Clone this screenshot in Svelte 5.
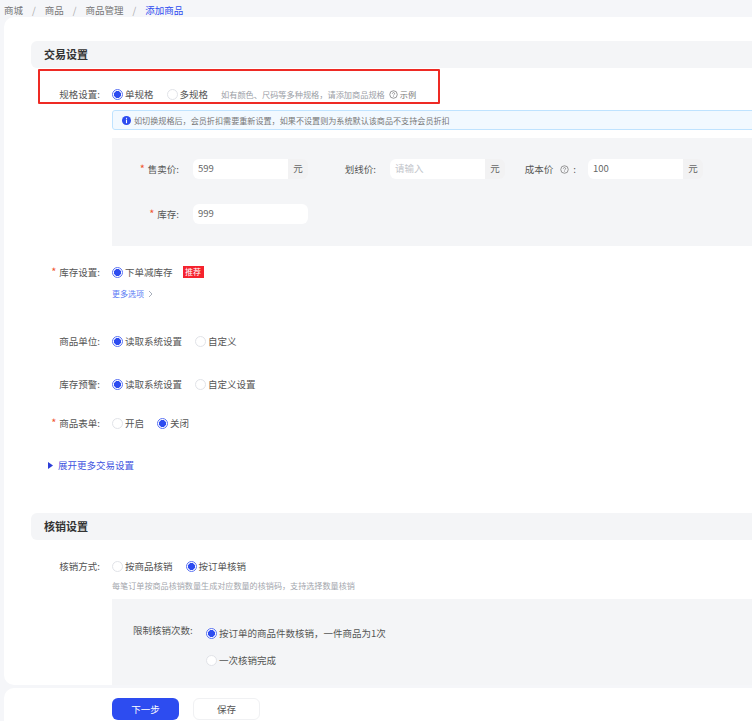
<script>
  const crumbs = ["商城", "商品", "商品管理"];

  const optionRows = [
    { label: "商品单位", name: "row-unit", options: [["读取系统设置", true], ["自定义", false]] },
    { label: "库存预警", name: "row-warn", options: [["读取系统设置", true], ["自定义设置", false]] },
    { label: "商品表单", name: "row-form", required: true, options: [["开启", false], ["关闭", true]] }
  ];
</script>

{#snippet radio(text, checked)}
  <span class="radio">
    <span class="dot" class:checked></span>
    <span>{text}</span>
  </span>
{/snippet}

{#snippet help(size)}
  <svg class="help" width={size} height={size} viewBox="0 0 12 12" fill="none" stroke="currentColor">
    <circle cx="6" cy="6" r="5" />
    <path d="M4.5 4.8a1.5 1.5 0 1 1 2.3 1.3c-.5.3-.8.6-.8 1.1" />
    <path d="M6 8.4v.8" />
  </svg>
{/snippet}

<div class="page">
  <nav class="crumbs">
    {#each crumbs as c}
      <span>{c}</span><span class="sep">/</span>
    {/each}
    <span class="current">添加商品</span>
  </nav>

  <main class="card">
    <h2 class="section">交易设置</h2>

    <div class="row spec">
      <div class="label">规格设置:</div>
      <div class="controls">
        {@render radio("单规格", true)}
        {@render radio("多规格", false)}
        <span class="hint">如有颜色、尺码等多种规格，请添加商品规格</span>
        <span class="example">{@render help(9)}示例</span>
      </div>
    </div>
    <div class="highlight"></div>

    <div class="indent alert">
      <svg width="9" height="9" viewBox="0 0 10 10">
        <circle cx="5" cy="5" r="5" fill="#2d4cf0" />
        <rect x="4.4" y="2" width="1.2" height="1.2" fill="#fff" />
        <rect x="4.4" y="4" width="1.2" height="4" fill="#fff" />
      </svg>
      <span>如切换规格后，会员折扣需要重新设置，如果不设置则为系统默认该商品不支持会员折扣</span>
    </div>

    <div class="indent panel prices">
      <div class="price-line">
        <div class="field first">
          <span class="flabel"><i>*</i>售卖价:</span>
          <span class="input"><span class="value">599</span></span><span class="unit">元</span>
        </div>
        <div class="field second">
          <span class="flabel">划线价:</span>
          <span class="input"><span class="placeholder">请输入</span></span><span class="unit">元</span>
        </div>
        <div class="field third">
          <span class="flabel">成本价{@render help(9)}:</span>
          <span class="input"><span class="value">100</span></span><span class="unit">元</span>
        </div>
      </div>
      <div class="price-line stock">
        <div class="field first">
          <span class="flabel"><i>*</i>库存:</span>
          <span class="input wide"><span class="value">999</span></span>
        </div>
      </div>
    </div>

    <div class="row stock-row">
      <div class="label"><i>*</i>库存设置:</div>
      <div class="controls">
        {@render radio("下单减库存", true)}
        <span class="badge">推荐</span>
      </div>
    </div>
    <div class="indent more">
      更多选项
      <svg width="5" height="8" viewBox="0 0 5 8" fill="none" stroke="#a9b0bd">
        <path d="M1 1l3 3-3 3" />
      </svg>
    </div>

    {#each optionRows as r}
      <div class="row {r.name}">
        <div class="label">{#if r.required}<i>*</i>{/if}{r.label}:</div>
        <div class="controls">
          {#each r.options as [text, checked]}
            {@render radio(text, checked)}
          {/each}
        </div>
      </div>
    {/each}

    <div class="expand">
      <svg width="5" height="7" viewBox="0 0 5 7"><path d="M0 0l5 3.5L0 7z" fill="#2d3fd8" /></svg>
      <span>展开更多交易设置</span>
    </div>

    <h2 class="section second-section">核销设置</h2>

    <div class="row verify">
      <div class="label">核销方式:</div>
      <div class="controls">
        {@render radio("按商品核销", false)}
        {@render radio("按订单核销", true)}
      </div>
    </div>
    <div class="indent verify-hint">每笔订单按商品核销数量生成对应数量的核销码，支持选择数量核销</div>

    <div class="indent panel limit">
      <div class="limit-label">限制核销次数:</div>
      <div class="limit-options">
        {@render radio("按订单的商品件数核销，一件商品为1次", true)}
        {@render radio("一次核销完成", false)}
      </div>
    </div>
  </main>

  <footer class="actions">
    <button class="primary">下一步</button>
    <button class="plain">保存</button>
  </footer>
</div>

<style>
  :global(body) {
    margin: 0;
    background: #f5f6f9;
    overflow: hidden;
  }
  .page {
    position: relative;
    width: 752px;
    height: 721px;
    overflow: hidden;
    font-family: "Noto Sans CJK SC", "Liberation Sans", sans-serif;
    font-size: 9.5px;
    color: #555;
  }
  .crumbs {
    height: 14px;
    padding: 3px 0 0 4px;
    display: flex;
    align-items: center;
    gap: 9px;
    color: #777;
  }
  .sep {
    color: #aaa;
  }
  .current {
    color: #2d4cf0;
  }
  .card {
    margin-left: 4px;
    width: 790px;
    height: 668px;
    padding: 24px 0 0 27px;
    box-sizing: border-box;
    background: #fff;
    border-radius: 10px;
    overflow: hidden;
  }
  .section {
    margin: 0;
    height: 27px;
    padding-left: 13px;
    line-height: 27px;
    font-size: 11px;
    font-weight: 700;
    color: #333;
    background: #f4f5f7;
    border-radius: 6px 0 0 6px;
  }
  .row {
    display: flex;
    align-items: center;
    height: 14px;
  }
  .label {
    width: 69px;
    text-align: right;
    white-space: nowrap;
    flex: none;
  }
  i {
    font-style: normal;
    font-size: 11px;
    line-height: 1;
    color: #f0562f;
    margin-right: 3px;
  }
  .controls {
    margin-left: 12px;
    display: flex;
    align-items: center;
    gap: 13px;
    white-space: nowrap;
  }
  .radio {
    display: inline-flex;
    align-items: center;
    gap: 2px;
    white-space: nowrap;
  }
  .dot {
    width: 11px;
    height: 11px;
    box-sizing: border-box;
    border: 1px solid #e1e3e8;
    border-radius: 50%;
    background: #fff;
    flex: none;
  }
  .dot.checked {
    border-color: #5a72f3;
    background: radial-gradient(circle, #2d4cf0 0 3.2px, #fff 3.8px);
  }
  .hint,
  .example {
    font-size: 8.2px;
    color: #9a9ea6;
  }
  .example {
    margin-left: -9px;
    display: inline-flex;
    align-items: center;
    gap: 2px;
    color: #777;
  }
  .help {
    flex: none;
    color: #777;
  }
  .spec {
    margin-top: 19px;
  }
  .highlight {
    position: absolute;
    left: 38px;
    top: 69px;
    width: 402px;
    height: 35px;
    box-sizing: border-box;
    border: 2px solid #ee2a24;
    border-radius: 1px;
    pointer-events: none;
  }
  .indent {
    margin-left: 81px;
  }
  .alert {
    margin-top: 9px;
    height: 20px;
    box-sizing: border-box;
    padding-left: 9px;
    display: flex;
    align-items: center;
    gap: 3px;
    background: #f2f9ff;
    border: 1px solid #bfe3ff;
    border-radius: 3px;
    font-size: 8.1px;
    color: #777;
    white-space: nowrap;
  }
  .panel {
    background: #f4f5f7;
  }
  .prices {
    margin-top: 8px;
    height: 108px;
    padding-top: 21px;
    box-sizing: border-box;
  }
  .price-line {
    display: flex;
    height: 20px;
  }
  .price-line.stock {
    margin-top: 25px;
  }
  .field {
    display: flex;
    align-items: center;
    white-space: nowrap;
  }
  .flabel {
    text-align: right;
    flex: none;
  }
  .first .flabel {
    width: 67px;
    margin-right: 14px;
  }
  .second {
    margin-left: 35px;
  }
  .second .flabel {
    width: 33px;
    margin-right: 14px;
  }
  .third {
    margin-left: 21px;
  }
  .third .flabel {
    width: 50px;
    margin-right: 12px;
    display: inline-flex;
    align-items: center;
    justify-content: flex-end;
  }
  .third .help {
    margin: 0 4px 0 7px;
  }
  .input {
    width: 95px;
    height: 20px;
    box-sizing: border-box;
    padding-left: 5px;
    background: #fff;
    border-radius: 6px 0 0 6px;
    line-height: 19px;
  }
  .input.wide {
    width: 115px;
    border-radius: 6px;
  }
  .value {
    color: #666;
  }
  .placeholder {
    color: #c3c6cc;
  }
  .unit {
    width: 20px;
    height: 20px;
    line-height: 19px;
    text-align: center;
    background: #f2f2f3;
    border-radius: 0 6px 6px 0;
    color: #666;
  }
  .stock-row {
    margin-top: 19px;
  }
  .badge {
    margin-left: -3px;
    height: 12px;
    padding: 0 2.5px;
    line-height: 12px;
    font-size: 8px;
    color: #fff;
    background: #f5222d;
  }
  .more {
    margin-top: 8px;
    height: 13px;
    display: flex;
    align-items: center;
    gap: 4px;
    font-size: 8px;
    color: #5b7cf5;
  }
  .row-unit {
    margin-top: 34px;
  }
  .row-warn {
    margin-top: 29px;
  }
  .row-form {
    margin-top: 25px;
  }
  .expand {
    margin: 28px 0 0 17px;
    height: 14px;
    display: flex;
    align-items: center;
    gap: 5px;
    color: #3f55e0;
  }
  .second-section {
    margin-top: 41px;
  }
  .verify {
    margin-top: 19px;
  }
  .verify-hint {
    margin-top: 6px;
    height: 13px;
    line-height: 13px;
    font-size: 8.1px;
    color: #a3a6ad;
  }
  .limit {
    margin-top: 7px;
    height: 100px;
    padding: 24px 0 0 21px;
    box-sizing: border-box;
    display: flex;
    gap: 11px;
  }
  .limit-label {
    width: 62px;
    white-space: nowrap;
    line-height: 14px;
  }
  .limit-options {
    display: flex;
    flex-direction: column;
    gap: 13px;
    align-items: flex-start;
    padding-top: 3px;
  }
  .actions {
    margin: 3px 0 0 4px;
    height: 40px;
    padding: 10px 0 0 108px;
    box-sizing: border-box;
    background: #fff;
    border-radius: 10px 0 0 0;
    display: flex;
    gap: 14px;
    align-items: flex-start;
  }
  button {
    height: 22px;
    width: 67px;
    border-radius: 6px;
    font-family: inherit;
    font-size: 9.5px;
    padding: 0;
  }
  .primary {
    background: #2d4cf0;
    border: 0;
    color: #fff;
  }
  .plain {
    background: #fff;
    border: 1px solid #f0f1f3;
    color: #555;
  }
</style>
